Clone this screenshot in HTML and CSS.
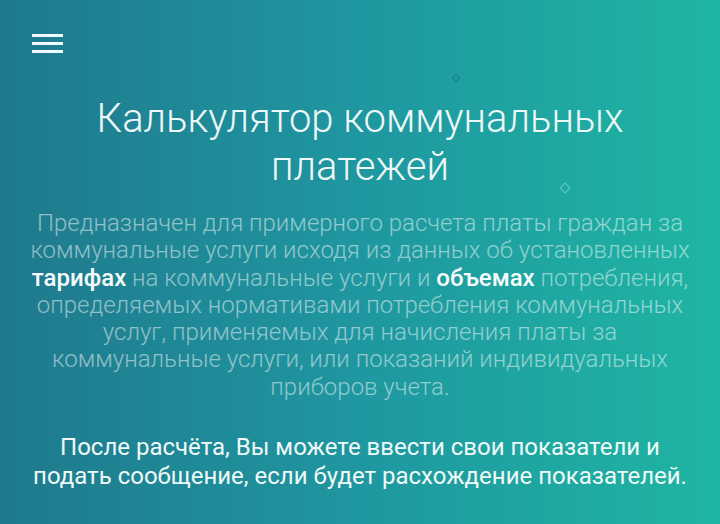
FILE: index.html
```html
<!DOCTYPE html>
<html lang="ru">
<head>
<meta charset="utf-8">
<link rel="stylesheet" href="styles.css">
</head>
<body>
<div class="page">
  <header class="top">
    <button class="menu" aria-label="Меню">
      <span></span><span></span><span></span>
    </button>
  </header>
  <span class="dot dot-a"></span>
  <span class="dot dot-b"></span>
  <main class="hero">
    <h1 class="title">Калькулятор коммунальных<br>платежей</h1>
    <p class="lead">Предназначен для примерного расчета платы граждан за<br>коммунальные услуги исходя из данных об установленных<br><b>тарифах</b> на коммунальные услуги и <b>объемах</b> потребления,<br>определяемых нормативами потребления коммунальных<br>услуг, применяемых для начисления платы за<br>коммунальные услуги, или показаний индивидуальных<br>приборов учета.</p>
    <p class="note">После расчёта, Вы можете ввести свои показатели и<br>подать сообщение, если будет расхождение показателей.</p>
  </main>
</div>
</body>
</html>
```
FILE: styles.css
```css
* { box-sizing: border-box; }
html, body { margin: 0; padding: 0; }
body {
  width: 720px;
  height: 524px;
  overflow: hidden;
  font-family: Roboto, "Noto Sans", sans-serif;
}
.page {
  position: relative;
  width: 720px;
  height: 524px;
  background: linear-gradient(90deg, #1f798d 0%, #1f97a0 50%, #1fb5a3 100%);
  color: #fff;
}
.top {
  padding: 34px 0 0 32px;
  height: 95px;
}
.menu {
  display: flex;
  flex-direction: column;
  gap: 5px;
  width: 32px;
  padding: 0;
  border: 0;
  background: none;
}
.menu span {
  display: block;
  height: 3px;
  width: 31px;
  background: #f2fbfb;
}
.dot {
  position: absolute;
  border: 1.5px solid;
  transform: rotate(45deg);
}
.dot-a { left: 453px; top: 75px; width: 6px; height: 6px; border-color: #1a7f8b; }
.dot-b { left: 561px; top: 184px; width: 8px; height: 8px; border-color: #5fcfc5; }
.hero {
  text-align: center;
  padding: 0 4px;
  white-space: nowrap;
}
.title {
  margin: 0;
  font-weight: 300;
  font-size: 40px;
  line-height: 48px;
  color: #eef8f8;
}
.lead {
  margin: 19px 0 0;
  font-weight: 300;
  font-size: 24px;
  line-height: 27.3px;
  color: rgba(255, 255, 255, 0.5);
}
.lead b {
  font-weight: 500;
  color: #f6fcfc;
}
.note {
  margin: 32px 0 0;
  font-weight: 400;
  font-size: 24px;
  line-height: 29px;
  color: #eef9f8;
}
```
